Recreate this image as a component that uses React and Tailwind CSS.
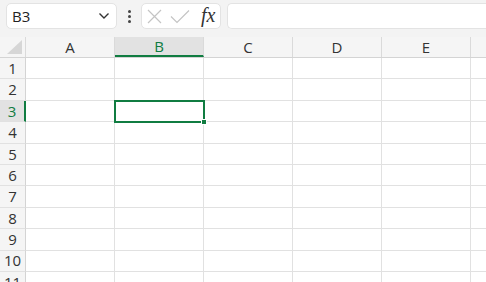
import React from "react";

const cols = ["A", "B", "C", "D", "E"];
const rows = [1, 2, 3, 4, 5, 6, 7, 8, 9, 10, 11];

export default function App() {
  return (
    <div className="w-[486px] h-[282px] overflow-hidden bg-white" style={{ fontFamily: '"Open Sans", "Noto Sans", sans-serif' }}>
      {/* formula bar */}
      <div className="h-[37px] bg-[#f3f3f3] flex items-start pt-[3px] pl-[6px]">
        <div className="w-[111px] h-[26px] bg-white border border-[#e3e3e3] rounded-[5px] flex items-center pl-[5px] pr-[6px]">
          <span className="text-[15px] text-[#222] flex-1 leading-none">B3</span>
          <svg width="12" height="8" viewBox="0 0 12 8"><path d="M1.5 1.5 L6 6 L10.5 1.5" fill="none" stroke="#333" strokeWidth="1.4" /></svg>
        </div>
        <div className="w-[24px] h-[26px] flex flex-col items-center justify-center gap-[2px]">
          <div className="w-[3px] h-[3px] rounded-full bg-[#444]" />
          <div className="w-[3px] h-[3px] rounded-full bg-[#444]" />
          <div className="w-[3px] h-[3px] rounded-full bg-[#444]" />
        </div>
        <div className="w-[80px] h-[26px] bg-white border border-[#e3e3e3] rounded-[5px] flex items-center pl-[5px]">
          <svg width="15" height="15" viewBox="0 0 15 15"><path d="M1 1 L14 14 M14 1 L1 14" stroke="#c4c4c4" strokeWidth="1.2" /></svg>
          <svg className="ml-[8px]" width="20" height="15" viewBox="0 0 20 15"><path d="M1 7.5 L7 13.5 L19 1.5" fill="none" stroke="#c4c4c4" strokeWidth="1.2" /></svg>
          <span className="ml-[11px] text-[20px] italic text-[#333] leading-none -mt-[3px]" style={{ fontFamily: '"Liberation Serif", "DejaVu Serif", serif' }}>fx</span>
        </div>
        <div className="ml-[6px] flex-1 h-[26px] bg-white border border-[#e3e3e3] border-r-0 rounded-l-[5px]" />
      </div>
      {/* column header */}
      <div className="flex h-[21px] bg-[#f5f5f5] border-b border-[#d4d4d4]">
        <div className="w-[26px] shrink-0 border-r border-[#dadada] relative">
          <svg className="absolute right-[3px] bottom-[3px]" width="15" height="14" viewBox="0 0 15 14"><path d="M15 0 L15 14 L0 14 Z" fill="#d6d6d6" /></svg>
        </div>
        {cols.map((c) => (
          <div
            key={c}
            className={`w-[89px] shrink-0 border-r border-[#dadada] flex items-center justify-center text-[15px] ${c === "B" ? "bg-[#e2e2e2] text-[#107c41] border-b-2 border-b-[#107c41]" : "text-[#333]"}`}
          >
            {c}
          </div>
        ))}
        <div className="flex-1" />
      </div>
      {/* grid */}
      <div className="relative">
        {rows.map((r) => (
          <div key={r} className="flex h-[21.4px]">
            <div
              className={`w-[26px] shrink-0 flex items-center justify-center text-[15px] border-b border-[#e1e1e1] ${r === 3 ? "bg-[#e2e2e2] text-[#107c41] border-r-2 border-r-[#107c41]" : "bg-[#f5f5f5] text-[#333] border-r border-r-[#d4d4d4]"}`}
            >
              {r}
            </div>
            {cols.map((c) => (
              <div key={c} className="w-[89px] shrink-0 border-r border-b border-[#e1e1e1]" />
            ))}
            <div className="flex-1 border-b border-[#e1e1e1]" />
          </div>
        ))}
        {/* selection */}
        <div className="absolute left-[114px] top-[41.8px] w-[91px] h-[23px] border-2 border-[#107c41]" />
        <div className="absolute left-[201px] top-[61px] w-[6px] h-[6px] bg-[#107c41] border border-white" />
      </div>
    </div>
  );
}
